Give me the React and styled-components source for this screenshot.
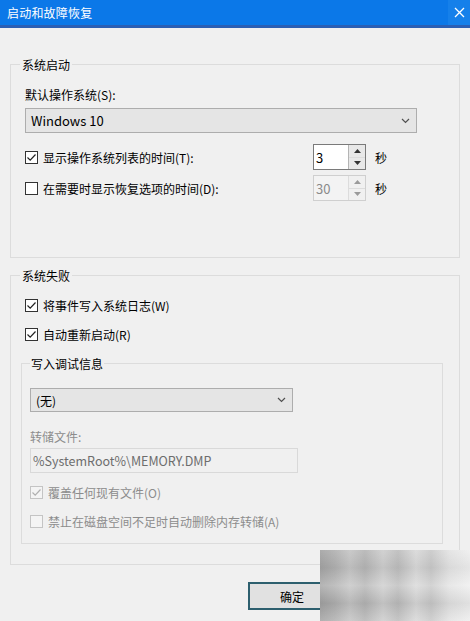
import styled, { createGlobalStyle } from 'styled-components';

const GlobalStyle = createGlobalStyle`
  html, body {
    margin: 0;
    background: #f0f0f0;
  }
  body {
    font-family: "Noto Sans CJK SC", "Noto Sans", sans-serif;
    font-size: 12px;
    line-height: 17px;
    color: #000;
  }
`

const Window = styled.div`
  position: relative;
  width: 470px;
  height: 621px;
  overflow: hidden;
  background: #f0f0f0;
`

const TitleBar = styled.div`
  height: 25px;
  background: #0b78e8;
  border-bottom: 3px solid #2b5fb4;
  display: flex;
  align-items: center;
  justify-content: space-between;
  color: #fff;
  padding-left: 7px;
`

const Title = styled.span`
  font-size: 12px;
  letter-spacing: 0.2px;
`

const CloseButton = styled.div`
  width: 22px;
  height: 25px;
  display: flex;
  align-items: center;
  justify-content: center;
  background: #1580ea;
`

const Body = styled.div`
  padding: 0 10px;
`

const Group = styled.fieldset`
  margin: ${p => p.$top}px 0 0;
  padding: 0 14px ${p => p.$bottom}px;
  border: 1px solid #dcdcdc;
  min-width: 0;
`

const Legend = styled.legend`
  margin-left: -5px;
  padding: 0 2px;
  line-height: 17px;
`

const InnerGroup = styled.fieldset`
  margin: 12px 2px 0 -4px;
  padding: 0 8px 13px;
  border: 1px solid #dcdcdc;
  min-width: 0;
`

const InnerLegend = styled.legend`
  padding: 0 1px;
  line-height: 17px;
`

const FieldLabel = styled.div`
  margin-top: ${p => p.$top}px;
  color: ${p => (p.$disabled ? '#8c8c8c' : '#000')};
`

const Combo = styled.div`
  margin-top: ${p => p.$top}px;
  width: ${p => p.$width}px;
  height: ${p => p.$height}px;
  box-sizing: border-box;
  border: 1px solid #adadad;
  background: #e5e5e5;
  display: flex;
  align-items: center;
  justify-content: space-between;
  padding: 0 6px 0 5px;
  font-size: ${p => (p.$latin ? '13px' : '12px')};
`

const TextField = styled.div`
  margin-top: 3px;
  width: 268px;
  height: 25px;
  box-sizing: border-box;
  border: 1px solid #d9d9d9;
  background: #f0f0f0;
  color: #6d6d6d;
  padding-left: 2px;
  display: flex;
  align-items: center;
  font-size: 12.5px;
`

const Row = styled.div`
  margin-top: ${p => p.$top}px;
  display: flex;
  align-items: center;
`

const CheckLabel = styled.label`
  display: flex;
  align-items: center;
  gap: 5px;
  width: ${p => (p.$width ? `${p.$width}px` : 'auto')};
  height: 17px;
  color: ${p => (p.$disabled ? '#8c8c8c' : '#000')};
`

const Box = styled.span`
  width: 13px;
  height: 13px;
  box-sizing: border-box;
  border: 1px solid ${p => (p.$disabled ? '#c4c4c4' : '#333')};
  background: ${p => (p.$disabled ? '#f4f4f4' : '#fff')};
  display: flex;
  align-items: center;
  justify-content: center;
`

const Spin = styled.div`
  width: 53px;
  height: 26px;
  box-sizing: border-box;
  display: flex;
  border: 1px solid ${p => (p.$disabled ? '#cfcfcf' : '#7a7a7a')};
  background: ${p => (p.$disabled ? '#f3f3f3' : '#fff')};
`

const SpinValue = styled.div`
  flex: 1;
  padding-left: 2px;
  display: flex;
  align-items: center;
  font-size: 13px;
  color: ${p => (p.$disabled ? '#8a8a8a' : '#000')};
`

const SpinButtons = styled.div`
  width: 16px;
  display: flex;
  flex-direction: column;
  border-left: 1px solid ${p => (p.$disabled ? '#dcdcdc' : '#b4b4b4')};
`

const SpinButton = styled.div`
  flex: 1;
  display: flex;
  align-items: center;
  justify-content: center;
  background: ${p => (p.$disabled ? '#f0f0f0' : '#e8e8e8')};
  & + & {
    border-top: 1px solid ${p => (p.$disabled ? '#dcdcdc' : '#b4b4b4')};
  }
`

const Unit = styled.span`
  margin-left: 9px;
`

const Footer = styled.div`
  display: flex;
  justify-content: flex-end;
  gap: 9px;
  margin-top: 17px;
  padding-right: 27px;
`

const Button = styled.button`
  width: 88px;
  height: 28px;
  box-sizing: border-box;
  font: inherit;
  color: #000;
  background: #e1e1e1;
  border: ${p => (p.$default ? '2px solid #2d5f6e' : '1px solid #adadad')};
  padding: 0;
`

// blurred watermark block over the bottom right corner
const Watermark = styled.div`
  position: absolute;
  left: 320px;
  top: 550px;
  width: 150px;
  height: 71px;
  background:
    linear-gradient(180deg, rgba(255,255,255,0.1) 0%, rgba(0,0,0,0.04) 25%, rgba(255,255,255,0.2) 50%, rgba(0,0,0,0.06) 75%, rgba(255,255,255,0.15) 100%),
    linear-gradient(90deg, #a2a2a2 0%, #b0b0b0 10%, #c4c4c4 20%, #b4b4b4 30%, #cdcdcd 42%, #bcbcbc 52%, #d8d8d8 64%, #c8c8c8 74%, #e2e2e2 86%, #eeeeee 100%);
`

function Check({ checked, disabled }) {
  return (
    <Box $disabled={disabled}>
      {checked && (
        <svg width="11" height="11" viewBox="0 0 11 11">
          <polyline points="1.5,5.5 4.2,8.2 9.5,2.5" fill="none" stroke={disabled ? '#b0b0b0' : '#222'} strokeWidth="1.2" />
        </svg>
      )}
    </Box>
  )
}

function Chevron() {
  return (
    <svg width="9" height="6" viewBox="0 0 9 6">
      <polyline points="1,1 4.5,4.5 8,1" fill="none" stroke="#505050" strokeWidth="1.2" />
    </svg>
  )
}

function Arrow({ up, disabled }) {
  return (
    <svg width="7" height="4" viewBox="0 0 7 4">
      <polygon points={up ? '0,4 3.5,0 7,4' : '0,0 3.5,4 7,0'} fill={disabled ? '#9a9a9a' : '#333'} />
    </svg>
  )
}

function SpinBox({ value, disabled }) {
  return (
    <Spin $disabled={disabled}>
      <SpinValue $disabled={disabled}>{value}</SpinValue>
      <SpinButtons $disabled={disabled}>
        <SpinButton $disabled={disabled}><Arrow up disabled={disabled} /></SpinButton>
        <SpinButton $disabled={disabled}><Arrow disabled={disabled} /></SpinButton>
      </SpinButtons>
    </Spin>
  )
}

function App() {
  return (
    <Window>
      <GlobalStyle />
      <TitleBar>
        <Title>启动和故障恢复</Title>
        <CloseButton>
          <svg width="11" height="11" viewBox="0 0 11 11">
            <path d="M1 1L10 10M10 1L1 10" stroke="#fff" strokeWidth="1.3" />
          </svg>
        </CloseButton>
      </TitleBar>
      <Body>
        <Group $top={28} $bottom={56}>
          <Legend>系统启动</Legend>
          <FieldLabel $top={13}>默认操作系统(S):</FieldLabel>
          <Combo $top={5} $width={392} $height={25} $latin>
            <span>Windows 10</span>
            <Chevron />
          </Combo>
          <Row $top={11}>
            <CheckLabel $width={288}>
              <Check checked />
              显示操作系统列表的时间(T):
            </CheckLabel>
            <SpinBox value="3" />
            <Unit>秒</Unit>
          </Row>
          <Row $top={5}>
            <CheckLabel $width={288}>
              <Check />
              在需要时显示恢复选项的时间(D):
            </CheckLabel>
            <SpinBox value="30" disabled />
            <Unit>秒</Unit>
          </Row>
        </Group>

        <Group $top={9} $bottom={20}>
          <Legend>系统失败</Legend>
          <Row $top={13}>
            <CheckLabel>
              <Check checked />
              将事件写入系统日志(W)
            </CheckLabel>
          </Row>
          <Row $top={12}>
            <CheckLabel>
              <Check checked />
              自动重新启动(R)
            </CheckLabel>
          </Row>
          <InnerGroup>
            <InnerLegend>写入调试信息</InnerLegend>
            <Combo $top={16} $width={263} $height={24}>
              <span>(无)</span>
              <Chevron />
            </Combo>
            <FieldLabel $top={16} $disabled>转储文件:</FieldLabel>
            <TextField>%SystemRoot%\MEMORY.DMP</TextField>
            <Row $top={11}>
              <CheckLabel $disabled>
                <Check checked disabled />
                覆盖任何现有文件(O)
              </CheckLabel>
            </Row>
            <Row $top={12}>
              <CheckLabel $disabled>
                <Check disabled />
                禁止在磁盘空间不足时自动删除内存转储(A)
              </CheckLabel>
            </Row>
          </InnerGroup>
        </Group>

        <Footer>
          <Button $default>确定</Button>
          <Button>取消</Button>
        </Footer>
      </Body>
      <Watermark />
    </Window>
  )
}

export default App
